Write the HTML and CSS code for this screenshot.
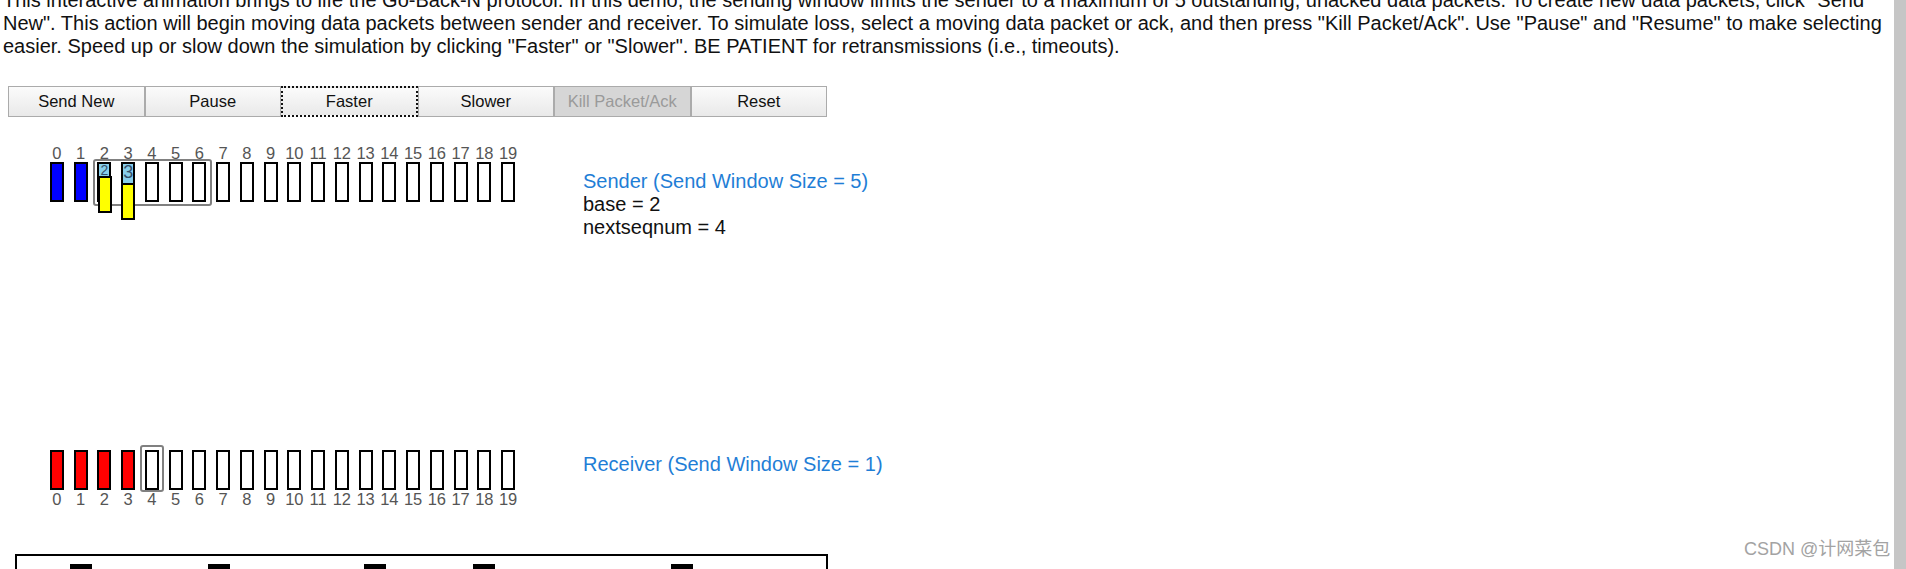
FILE: index.html
```html
<html>
<head>
    <title>Go-Back-N Protocol</title>
    <link rel="stylesheet" href="styles.css">
</head>
<body>
<p class="intro">This interactive animation brings to life the Go-Back-N protocol. In this demo, the sending window limits the sender to a maximum of 5 outstanding, unacked data packets. To create new data packets, click "Send New". This action will begin moving data packets between sender and receiver. To simulate loss, select a moving data packet or ack, and then press "Kill Packet/Ack". Use "Pause" and "Resume" to make selecting easier. Speed up or slow down the simulation by clicking "Faster" or "Slower". BE PATIENT for retransmissions (i.e., timeouts).</p>

<div class="controls">
    <button id="send-new">Send New</button>
    <button id="pause">Pause</button>
    <button id="faster" class="focused">Faster</button>
    <button id="slower">Slower</button>
    <button id="kill" class="disabled">Kill Packet/Ack</button>
    <button id="reset">Reset</button>
</div>

<div class="side sender">
    <div class="lane">
        <div class="slot"><span class="num">0</span><span class="cell acked"></span></div>
        <div class="slot"><span class="num">1</span><span class="cell acked"></span></div>
        <div class="slot"><span class="num">2</span><span class="cell sent"><span class="tag">2</span></span></div>
        <div class="slot"><span class="num">3</span><span class="cell sent"><span class="tag big">3</span></span></div>
        <div class="slot"><span class="num">4</span><span class="cell"></span></div>
        <div class="slot"><span class="num">5</span><span class="cell"></span></div>
        <div class="slot"><span class="num">6</span><span class="cell"></span></div>
        <div class="slot"><span class="num">7</span><span class="cell"></span></div>
        <div class="slot"><span class="num">8</span><span class="cell"></span></div>
        <div class="slot"><span class="num">9</span><span class="cell"></span></div>
        <div class="slot"><span class="num">10</span><span class="cell"></span></div>
        <div class="slot"><span class="num">11</span><span class="cell"></span></div>
        <div class="slot"><span class="num">12</span><span class="cell"></span></div>
        <div class="slot"><span class="num">13</span><span class="cell"></span></div>
        <div class="slot"><span class="num">14</span><span class="cell"></span></div>
        <div class="slot"><span class="num">15</span><span class="cell"></span></div>
        <div class="slot"><span class="num">16</span><span class="cell"></span></div>
        <div class="slot"><span class="num">17</span><span class="cell"></span></div>
        <div class="slot"><span class="num">18</span><span class="cell"></span></div>
        <div class="slot"><span class="num">19</span><span class="cell"></span></div>
        <div class="window send-window"></div>
        <div class="packet pkt-2"></div>
        <div class="packet pkt-3"></div>
    </div>
    <div class="info">
        <div class="title">Sender (Send Window Size = 5)</div>
        <div>base = 2</div>
        <div>nextseqnum = 4</div>
    </div>
</div>

<div class="side receiver">
    <div class="lane">
        <div class="slot"><span class="cell got"></span><span class="num">0</span></div>
        <div class="slot"><span class="cell got"></span><span class="num">1</span></div>
        <div class="slot"><span class="cell got"></span><span class="num">2</span></div>
        <div class="slot"><span class="cell got"></span><span class="num">3</span></div>
        <div class="slot"><span class="cell"></span><span class="num">4</span></div>
        <div class="slot"><span class="cell"></span><span class="num">5</span></div>
        <div class="slot"><span class="cell"></span><span class="num">6</span></div>
        <div class="slot"><span class="cell"></span><span class="num">7</span></div>
        <div class="slot"><span class="cell"></span><span class="num">8</span></div>
        <div class="slot"><span class="cell"></span><span class="num">9</span></div>
        <div class="slot"><span class="cell"></span><span class="num">10</span></div>
        <div class="slot"><span class="cell"></span><span class="num">11</span></div>
        <div class="slot"><span class="cell"></span><span class="num">12</span></div>
        <div class="slot"><span class="cell"></span><span class="num">13</span></div>
        <div class="slot"><span class="cell"></span><span class="num">14</span></div>
        <div class="slot"><span class="cell"></span><span class="num">15</span></div>
        <div class="slot"><span class="cell"></span><span class="num">16</span></div>
        <div class="slot"><span class="cell"></span><span class="num">17</span></div>
        <div class="slot"><span class="cell"></span><span class="num">18</span></div>
        <div class="slot"><span class="cell"></span><span class="num">19</span></div>
        <div class="window recv-window"></div>
    </div>
    <div class="info">
        <div class="title">Receiver (Send Window Size = 1)</div>
    </div>
</div>

<div class="timeline">
    <span class="mark" style="left: 53px"></span>
    <span class="mark" style="left: 191px"></span>
    <span class="mark" style="left: 347px"></span>
    <span class="mark" style="left: 456px"></span>
    <span class="mark" style="left: 654px"></span>
</div>

<div class="scrollbar"></div>
<div class="watermark">CSDN @计网菜包</div>
</body>
</html>
```

FILE: styles.css
```css
body {
    margin: 0;
    height: 569px;
    overflow: hidden;
    font-family: "Liberation Sans", Arial, "Noto Sans CJK SC", sans-serif;
    color: #111;
    background: #fff;
}

.intro {
    margin: -11px 0 0 3px;
    width: 1886px;
    font-size: 20px;
    line-height: 23px;
}

.controls {
    display: flex;
    margin: 28px 0 0 8px;
}

button {
    width: 136.5px;
    height: 31px;
    font-family: "Liberation Sans", Arial, sans-serif;
    font-size: 16.5px;
    color: #111;
    background: linear-gradient(#fbfbfb, #e9e9e9);
    border: 1px solid #ababab;
    padding: 0;
}

button.focused {
    border: 2px dotted #111;
}

button.disabled {
    background: #d6d6d6;
    color: #9a9a9a;
}

.side {
    display: flex;
    gap: 63px;
    margin-left: 45px;
}

.sender {
    margin-top: 27px;
}

.receiver {
    margin-top: 211px;
}

.lane {
    position: relative;
    display: flex;
}

.slot {
    width: 23.75px;
    display: flex;
    flex-direction: column;
    align-items: center;
}

.num {
    font-size: 16.5px;
    line-height: 18px;
    color: #555;
}

.cell {
    box-sizing: border-box;
    width: 14px;
    height: 40px;
    border: 2px solid #000;
    background: #fff;
    display: flex;
    justify-content: center;
}

.cell.acked {
    background: #0000ff;
}

.cell.sent {
    background: #87ceeb;
}

.cell.got {
    background: #ff0000;
}

.tag {
    font-size: 14px;
    line-height: 13px;
    color: #35506a;
}

.tag.big {
    font-size: 18px;
    line-height: 17px;
}

.window {
    position: absolute;
    box-sizing: border-box;
    border: 2px solid #808080;
    border-radius: 3px;
}

.send-window {
    left: 47.5px;
    top: 15px;
    width: 119px;
    height: 47px;
}

.recv-window {
    left: 95px;
    top: -5px;
    width: 24px;
    height: 47px;
}

.packet {
    position: absolute;
    box-sizing: border-box;
    width: 14px;
    height: 37px;
    background: #ffff00;
    border: 2px solid #000;
}

.pkt-2 {
    left: 52.5px;
    top: 32px;
}

.pkt-3 {
    left: 76.25px;
    top: 39px;
}

.info {
    font-size: 20px;
    line-height: 23px;
    color: #111;
}

.sender .info {
    padding-top: 26px;
}

.receiver .info {
    padding-top: 3px;
}

.info .title {
    color: #1f7ed6;
}

.timeline {
    position: relative;
    box-sizing: border-box;
    margin: 46px 0 0 15px;
    width: 813px;
    height: 60px;
    border: 2px solid #000;
}

.mark {
    position: absolute;
    top: 8px;
    width: 22px;
    height: 5px;
    background: #000;
}

.scrollbar {
    position: absolute;
    top: 0;
    right: 0;
    width: 12px;
    height: 569px;
    background: #c6c6c6;
}

.watermark {
    position: absolute;
    left: 1744px;
    top: 538px;
    font-size: 18px;
    line-height: 22px;
    color: #a3a3a3;
}
```
